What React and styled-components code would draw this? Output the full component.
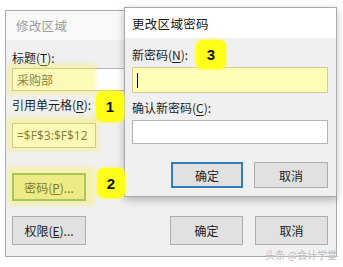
import styled, {createGlobalStyle} from 'styled-components';

const Global = createGlobalStyle`
	html, body {
		margin: 0;
		padding: 0;
		background: #ffffff;
	}
	body {
		font-family: "Noto Sans CJK SC", "Noto Sans", sans-serif;
		font-size: 12px;
		color: #1e1e1e;
	}
`;

const Stage = styled.div`
	position: relative;
	width: 343px;
	height: 267px;
	overflow: hidden;
	background: #ffffff;
`;

const Dialog = styled.div`
	position: absolute;
	left: ${p => p.$x}px;
	top: ${p => p.$y}px;
	width: ${p => p.$w}px;
	height: ${p => p.$h}px;
	box-sizing: border-box;
	border: 1px solid #a9a9a9;
	background: #f0f0f0;
	display: flex;
	flex-direction: column;
	box-shadow: ${p => (p.$front ? '0 3px 8px rgba(0,0,0,0.25)' : 'none')};
`;

const TitleBar = styled.div`
	height: ${p => p.$h}px;
	flex: none;
	display: flex;
	align-items: center;
	padding-left: ${p => p.$pad}px;
	background: ${p => (p.$active ? '#ffffff' : '#f9f9f9')};
	color: ${p => (p.$active ? '#1a1a1a' : '#a0a0a0')};
	font-size: 12.5px;
	letter-spacing: 0.3px;
`;

const Body = styled.div`
	flex: 1;
	display: flex;
	flex-direction: column;
	padding: ${p => p.$pad};
`;

const Label = styled.div`
	height: 16px;
	line-height: 16px;
	font-size: 12px;
	margin-bottom: ${p => p.$mb || 0}px;
	white-space: nowrap;
	u {
		text-underline-offset: 2px;
	}
`;

const Field = styled.div`
	box-sizing: border-box;
	height: ${p => p.$h}px;
	width: ${p => p.$w ? `${p.$w}px` : 'auto'};
	border: 1px solid ${p => (p.$yellow ? '#d4cf95' : '#b4b4b4')};
	background: ${p => (p.$yellow ? '#ffffb6' : '#ffffff')};
	display: flex;
	align-items: center;
	padding-left: 4px;
	font-family: ${p => (p.$mono ? '"Noto Sans", "Liberation Sans", sans-serif' : 'inherit')};
	font-size: 12px;
	color: #333;
	margin-bottom: ${p => p.$mb || 0}px;
`;

const Caret = styled.span`
	display: block;
	width: 1px;
	height: 15px;
	background: #000;
`;

const ButtonRow = styled.div`
	display: flex;
	justify-content: ${p => p.$justify || 'flex-end'};
	align-items: center;
	gap: ${p => p.$gap || 11}px;
	margin-top: auto;
`;

const Button = styled.div`
	box-sizing: border-box;
	width: ${p => p.$w}px;
	height: ${p => p.$h}px;
	display: flex;
	align-items: center;
	justify-content: center;
	font-size: 12px;
	background: ${p => (p.$green ? '#e4e7a8' : '#e1e1e1')};
	border: ${p =>
		p.$primary ? '2px solid #2f7fc0' : p.$green ? '2px solid #74a26f' : '1px solid #adadad'};
	color: #222;
`;

const Badge = styled.div`
	position: absolute;
	left: ${p => p.$x}px;
	top: ${p => p.$y}px;
	width: ${p => p.$w}px;
	height: ${p => p.$h}px;
	border-radius: 7px;
	background: #ffff1a;
	box-shadow: 0 0 3px 1px rgba(255, 250, 90, 0.8);
	display: flex;
	align-items: center;
	justify-content: center;
	font-family: "Liberation Sans", "DejaVu Sans", sans-serif;
	font-weight: bold;
	font-size: 15px;
	color: #111;
	z-index: 3;
`;

const Glow = styled.div`
	position: absolute;
	left: ${p => p.$x}px;
	top: ${p => p.$y}px;
	width: ${p => p.$w}px;
	height: ${p => p.$h}px;
	background: rgba(250, 240, 80, 0.42);
	filter: blur(2px);
	pointer-events: none;
	z-index: 1;
`;

const Watermark = styled.div`
	position: absolute;
	right: 6px;
	bottom: 5px;
	font-size: 10px;
	color: #b8b8b8;
	text-shadow: 0 0 2px #fff;
	z-index: 4;
`;

export default function App() {
	return (
		<>
			<Global />
			<Stage>
				<Dialog $x={5} $y={10} $w={332} $h={247}>
					<TitleBar $h={29} $pad={10}>修改区域</TitleBar>
					<Body $pad="10px 0 11px 6px">
						<Label $mb={2}>标题(<u>T</u>):</Label>
						<Field $h={23} $w={130} $mb={6}>采购部</Field>
						<Label $mb={10}>引用单元格(<u>R</u>):</Label>
						<Field $h={25} $w={84} $mono>=$F$3:$F$12</Field>
						<Button $w={74} $h={28} $green style={{marginTop: 25}}>
							密码(<u>P</u>)...
						</Button>
						<ButtonRow $justify="space-between" style={{paddingRight: 8}}>
							<Button $w={74} $h={29}>权限(<u>E</u>)...</Button>
							<ButtonRow $gap={12}>
								<Button $w={73} $h={29}>确定</Button>
								<Button $w={73} $h={29}>取消</Button>
							</ButtonRow>
						</ButtonRow>
					</Body>
				</Dialog>

				<Glow $x={8} $y={64} $w={88} $h={30} />
				<Glow $x={8} $y={117} $w={90} $h={34} />
				<Glow $x={8} $y={167} $w={86} $h={38} />

				<Dialog $x={124} $y={7} $w={213} $h={190} $front style={{zIndex: 2}}>
					<TitleBar $h={30} $pad={7} $active>更改区域密码</TitleBar>
					<Body $pad="9px 8px 8px 7px">
						<Label $mb={4}>新密码(<u>N</u>):</Label>
						<Field $h={26} $yellow $mb={7}>
							<Caret />
						</Field>
						<Label $mb={4}>确认新密码(<u>C</u>):</Label>
						<Field $h={24} />
						<ButtonRow $gap={11}>
							<Button $w={72} $h={26} $primary>确定</Button>
							<Button $w={74} $h={26}>取消</Button>
						</ButtonRow>
					</Body>
				</Dialog>

				<Badge $x={96} $y={91} $w={28} $h={31}>1</Badge>
				<Badge $x={97} $y={168} $w={28} $h={30}>2</Badge>
				<Badge $x={196} $y={40} $w={30} $h={29}>3</Badge>

				<Watermark>头条 @会计学堂</Watermark>
			</Stage>
		</>
	);
}
